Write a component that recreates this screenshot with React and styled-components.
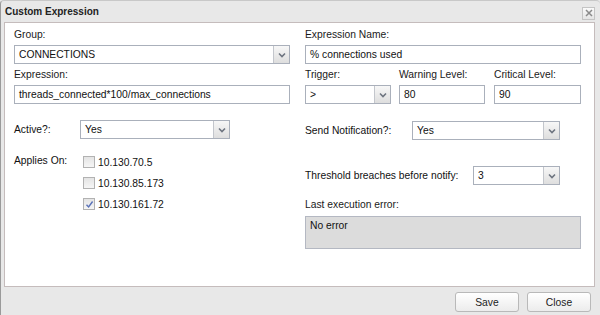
import React from "react";
import styled, { createGlobalStyle } from "styled-components";

const Global = createGlobalStyle`
  html, body { margin: 0; padding: 0; background: #e9e9e9; }
  body { font-family: "Liberation Sans", Arial, sans-serif; font-size: 10.3px; color: #111; }
  * { box-sizing: border-box; }
`;

const Dialog = styled.div`
  width: 600px;
  height: 315px;
  background: #e8e8e8;
  border-left: 1px solid #9a9a9a;
  border-top: 1px solid #c8c8c8;
  border-radius: 4px 4px 0 0;
  display: flex;
  flex-direction: column;
`;

const TitleBar = styled.div`
  height: 21px;
  display: flex;
  align-items: center;
  justify-content: space-between;
  padding: 0 5px 0 4px;
  font-weight: bold;
  font-size: 10px;
  color: #222;
`;

const CloseBtn = styled.div`
  width: 13px;
  height: 13px;
  margin-top: 3px;
  border: 1px solid #c4c4c4;
  background: linear-gradient(#fafafa, #e4e4e4);
  display: flex;
  align-items: center;
  justify-content: center;
`;

const Panel = styled.div`
  margin: 0 5px 0 3px;
  height: 265px;
  background: #fff;
  border: 1px solid #c5bcbc;
  display: grid;
  grid-template-columns: 276px 276px;
  column-gap: 15px;
  padding: 0 0 0 9px;
`;

const Column = styled.div`
  display: flex;
  flex-direction: column;
`;

const Label = styled.div`
  height: 14px;
  line-height: 14px;
  margin-top: ${(p) => p.$mt || 0}px;
  white-space: nowrap;
  color: #1a1a1a;
`;

const TextBox = styled.div`
  height: ${(p) => p.$h || 19}px;
  width: ${(p) => (p.$w ? p.$w + "px" : "100%")};
  margin-top: ${(p) => p.$mt || 0}px;
  border: 1px solid #aab0bb;
  background: #fff;
  padding: 0 4px;
  line-height: 17px;
  white-space: nowrap;
`;

const ReadOnlyBox = styled(TextBox)`
  background: #dcdcdc;
  border-color: #b4b8c2;
  line-height: 16px;
  padding-top: 1px;
`;

const SelectBox = styled.div`
  height: 19px;
  width: ${(p) => (p.$w ? p.$w + "px" : "100%")};
  margin-top: ${(p) => p.$mt || 0}px;
  border: 1px solid #aab0bb;
  background: #fff;
  display: flex;
  white-space: nowrap;
`;

const SelectValue = styled.div`
  flex: 1;
  padding: 0 4px;
  line-height: 17px;
`;

const Arrow = styled.div`
  width: 16px;
  border-left: 1px solid #c3c6cc;
  background: linear-gradient(#f7f7f7, #dedede);
  display: flex;
  align-items: center;
  justify-content: center;
`;

const Row = styled.div`
  display: flex;
  align-items: ${(p) => p.$align || "center"};
  margin-top: ${(p) => p.$mt || 0}px;
`;

const FieldGroup = styled.div`
  display: flex;
  flex-direction: column;
  margin-left: ${(p) => p.$ml || 0}px;
`;

const InlineLabel = styled.div`
  width: ${(p) => p.$w}px;
  flex-shrink: 0;
  white-space: nowrap;
`;

const CheckList = styled.div`
  display: flex;
  flex-direction: column;
  gap: 7px;
`;

const CheckRow = styled.div`
  display: flex;
  align-items: center;
  height: 14px;
  gap: 3px;
`;

const Box = styled.div`
  width: 12px;
  height: 12px;
  border: 1px solid #b2b2b2;
  background: linear-gradient(#e4e4e4, #f6f6f6);
  display: flex;
  align-items: center;
  justify-content: center;
`;

const Footer = styled.div`
  flex: 1;
  display: flex;
  justify-content: flex-end;
  align-items: flex-start;
  gap: 8px;
  padding: 5px 9px 0 0;
`;

const Button = styled.div`
  width: 64px;
  height: 20px;
  border: 1px solid #b9b9b9;
  border-radius: 3px;
  background: linear-gradient(#ffffff, #ececec);
  display: flex;
  align-items: center;
  justify-content: center;
  color: #222;
`;

const Chevron = () => (
  <svg width="8" height="6" viewBox="0 0 8 6">
    <path d="M1 1.5 L4 4.5 L7 1.5" fill="none" stroke="#6e7580" strokeWidth="1.6" />
  </svg>
);

const Select = ({ value, w, mt }) => (
  <SelectBox $w={w} $mt={mt}>
    <SelectValue>{value}</SelectValue>
    <Arrow>
      <Chevron />
    </Arrow>
  </SelectBox>
);

const Check = ({ checked, label }) => (
  <CheckRow>
    <Box>
      {checked && (
        <svg width="9" height="9" viewBox="0 0 9 9">
          <path d="M1.5 4.8 L3.6 7 L7.6 1.5" fill="none" stroke="#5a72b8" strokeWidth="1.4" />
        </svg>
      )}
    </Box>
    <span>{label}</span>
  </CheckRow>
);

export default function App() {
  return (
    <>
      <Global />
      <Dialog>
        <TitleBar>
          <span>Custom Expression</span>
          <CloseBtn>
            <svg width="8" height="8" viewBox="0 0 8 8">
              <path d="M1 1 L7 7 M7 1 L1 7" stroke="#8a8a8a" strokeWidth="1.5" />
            </svg>
          </CloseBtn>
        </TitleBar>
        <Panel>
          <Column>
            <Label $mt={5}>Group:</Label>
            <Select value="CONNECTIONS" mt={3} w={276} />
            <Label $mt={4}>Expression:</Label>
            <TextBox $mt={3} $h={19}>threads_connected*100/max_connections</TextBox>
            <Row $mt={16}>
              <InlineLabel $w={66}>Active?:</InlineLabel>
              <Select value="Yes" w={150} />
            </Row>
            <Row $mt={16} $align="flex-start">
              <InlineLabel $w={69}>Applies On:</InlineLabel>
              <CheckList>
                <Check label="10.130.70.5" />
                <Check label="10.130.85.173" />
                <Check checked label="10.130.161.72" />
              </CheckList>
            </Row>
          </Column>
          <Column>
            <Label $mt={5}>Expression Name:</Label>
            <TextBox $mt={3} $h={19}>% connections used</TextBox>
            <Row $mt={4} $align="flex-start">
              <FieldGroup>
                <Label>Trigger:</Label>
                <Select value=">" w={86} mt={3} />
              </FieldGroup>
              <FieldGroup $ml={8}>
                <Label>Warning Level:</Label>
                <TextBox $w={86} $mt={3}>80</TextBox>
              </FieldGroup>
              <FieldGroup $ml={9}>
                <Label>Critical Level:</Label>
                <TextBox $w={87} $mt={3}>90</TextBox>
              </FieldGroup>
            </Row>
            <Row $mt={17}>
              <InlineLabel $w={107}>Send Notification?:</InlineLabel>
              <Select value="Yes" w={148} />
            </Row>
            <Row $mt={26}>
              <InlineLabel $w={168}>Threshold breaches before notify:</InlineLabel>
              <Select value="3" w={87} />
            </Row>
            <Label $mt={13}>Last execution error:</Label>
            <ReadOnlyBox $mt={4} $h={33}>No error</ReadOnlyBox>
          </Column>
        </Panel>
        <Footer>
          <Button>Save</Button>
          <Button>Close</Button>
        </Footer>
      </Dialog>
    </>
  );
}
